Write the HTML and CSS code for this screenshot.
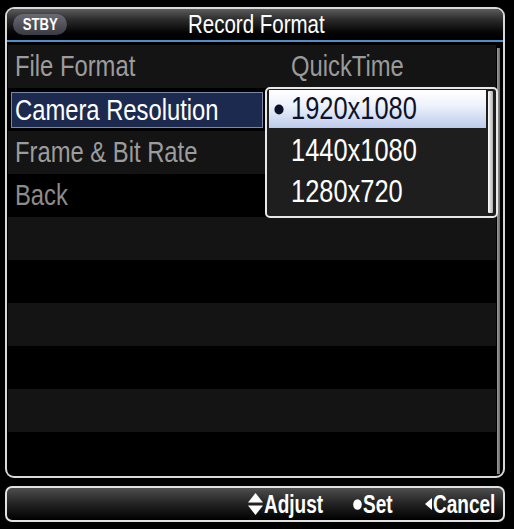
FILE: index.html
```html
<!DOCTYPE html>
<html>
<head>
<meta charset="utf-8">
<link rel="stylesheet" href="styles.css">
</head>
<body>
<div class="screen">
  <div class="panel">
    <div class="header">
      <span class="stby"><span class="n c">STBY</span></span>
      <span class="title"><span class="n c">Record Format</span></span>
    </div>
    <div class="blue-line"></div>
    <div class="body">
      <div class="list">
        <div class="row odd"><span class="label"><span class="n">File Format</span></span><span class="value"><span class="n">QuickTime</span></span></div>
        <div class="row even"><span class="sel"><span class="n">Camera Resolution</span></span></div>
        <div class="row odd"><span class="label"><span class="n">Frame &amp; Bit Rate</span></span></div>
        <div class="row even"><span class="label dim"><span class="n">Back</span></span></div>
        <div class="row odd empty"></div>
        <div class="row even empty"></div>
        <div class="row odd empty"></div>
        <div class="row even empty"></div>
        <div class="row odd empty"></div>
        <div class="row even empty"></div>
        <div class="popup">
          <div class="opts">
            <div class="opt active"><span class="dot"><svg width="10" height="11" viewBox="0 0 10 11"><ellipse cx="5" cy="5.5" rx="4.6" ry="5" fill="#0e1128"/></svg></span><span class="n">1920x1080</span></div>
            <div class="opt"><span class="dot"></span><span class="n">1440x1080</span></div>
            <div class="opt"><span class="dot"></span><span class="n">1280x720</span></div>
          </div>
          <div class="pscroll"></div>
        </div>
      </div>
      <div class="track"></div>
    </div>
  </div>
  <div class="footer">
    <span class="hint w1">
      <svg class="ic" width="15" height="22" viewBox="0 0 15 22"><polygon points="7.5,0 15,9.5 0,9.5" fill="#fff"/><polygon points="0,12.5 15,12.5 7.5,22" fill="#fff"/></svg><span class="n f">Adjust</span>
    </span>
    <span class="hint w2">
      <svg class="ic" width="9" height="11" viewBox="0 0 9 11"><ellipse cx="4.5" cy="5.5" rx="4.3" ry="5.3" fill="#fff"/></svg><span class="n f">Set</span>
    </span>
    <span class="hint w3">
      <svg class="ic" width="7" height="12" viewBox="0 0 7 12"><polygon points="7,0 7,12 0,6" fill="#fff"/></svg><span class="n f">Cancel</span>
    </span>
  </div>
</div>
</body>
</html>
```
FILE: styles.css
```css
html, body {
  margin: 0;
  padding: 0;
  background: #000;
}
body {
  font-family: "Liberation Sans", Arial, sans-serif;
  width: 514px;
  height: 529px;
  overflow: hidden;
}
.n {
  display: inline-block;
  white-space: nowrap;
  transform: scaleX(0.82);
  transform-origin: 0 50%;
}
.n.c {
  transform-origin: 50% 50%;
}
.n.f {
  transform: scaleX(0.76);
  flex: none;
}
.ic {
  flex: none;
  display: block;
}
.screen {
  padding: 7px 9px 0 5px;
  display: flex;
  flex-direction: column;
  gap: 8px;
}
.panel {
  height: 471px;
  box-sizing: border-box;
  border: 2px solid #d8d8d8;
  border-radius: 9px;
  background: #000;
  display: flex;
  flex-direction: column;
  overflow: hidden;
}
.header {
  height: 31px;
  background: linear-gradient(#5c5c5c 0%, #2a2a2a 35%, #050505 75%, #000 100%);
  position: relative;
  display: flex;
  align-items: center;
  justify-content: center;
}
.stby {
  position: absolute;
  left: 6px;
  top: 5px;
  width: 54px;
  height: 21px;
  border-radius: 11px;
  background: linear-gradient(#6a6a72, #3a3a42);
  color: #fff;
  font-size: 16px;
  font-weight: bold;
  line-height: 21px;
  text-align: center;
}
.title {
  color: #fff;
  font-size: 25px;
  line-height: 31px;
  padding-left: 2px;
}
.blue-line {
  height: 2px;
  background: #4f8ec8;
  margin-bottom: 3px;
}
.body {
  flex: 1;
  display: flex;
  padding-left: 1px;
}
.list {
  position: relative;
  width: 488px;
}
.track {
  width: 3px;
  margin: 3px 0 2px 1px;
  background: linear-gradient(90deg, #9a9a9a, #6a6a6a);
}
.row {
  height: 43px;
  display: flex;
  align-items: center;
  font-size: 29px;
  color: #9c9c9c;
}
.row.odd { background: #141414; }
.row.even { background: #000; }
.label {
  padding-left: 7px;
  width: 276px;
  flex: none;
}
.value {
  color: #9a9a9a;
}
.dim { color: #8c8c8c; }
.sel {
  margin-left: 3px;
  width: 252px;
  height: 36px;
  box-sizing: border-box;
  border: 1px solid #7d88a8;
  background: #1d2a4f;
  color: #fff;
  padding-left: 3px;
  line-height: 34px;
}
.popup {
  position: absolute;
  left: 257px;
  top: 42px;
  width: 233px;
  height: 131px;
  box-sizing: border-box;
  border: 2px solid #e8e8e8;
  border-radius: 5px;
  background: #1e1e1e;
  display: flex;
  padding: 1px 3px 2px 2px;
  gap: 2px;
}
.opts {
  flex: 1;
  display: flex;
  flex-direction: column;
}
.opt {
  height: 41px;
  display: flex;
  align-items: center;
  font-size: 31px;
  color: #fff;
}
.opt.active {
  height: 38px;
  margin-bottom: 2px;
  background: linear-gradient(#ffffff 0%, #eef2fb 40%, #bccbec 100%);
  color: #0e1128;
}
.dot {
  width: 22px;
  flex: none;
  padding-left: 5px;
  box-sizing: border-box;
  display: flex;
  align-items: center;
}
.pscroll {
  width: 5px;
  margin: 1px 0 1px;
  background: linear-gradient(90deg, #ffffff, #b0b0b0);
  border-radius: 1px;
}
.footer {
  height: 36px;
  box-sizing: border-box;
  border: 2px solid #e0e0e0;
  border-radius: 7px;
  background: linear-gradient(#4e4e4e 0%, #262626 45%, #000 100%);
  display: flex;
  justify-content: flex-end;
  align-items: center;
  gap: 30px;
  padding-right: 10px;
}
.hint {
  display: flex;
  align-items: center;
  color: #fff;
  font-size: 25px;
  font-weight: bold;
  gap: 1px;
  flex: none;
}
.w1 { width: 75px; }
.w2 { width: 42px; }
.w3 { width: 68px; }
```
